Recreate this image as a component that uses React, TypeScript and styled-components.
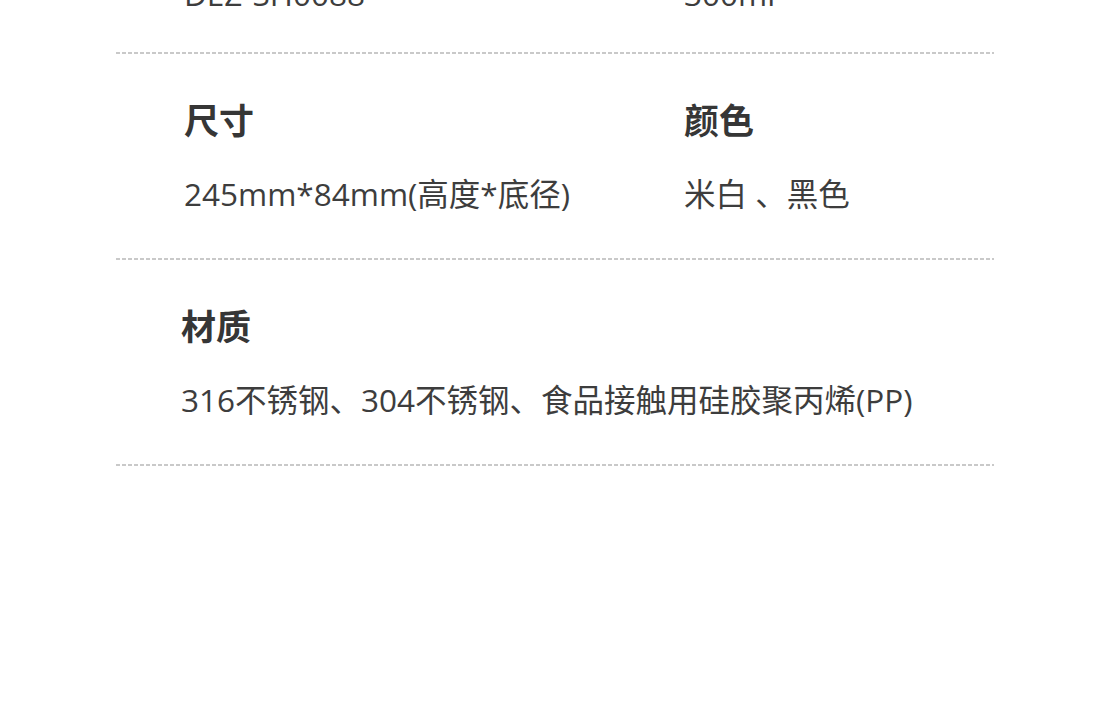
import React from "react";
import styled, { createGlobalStyle } from "styled-components";

const GlobalStyle = createGlobalStyle`
  html, body {
    margin: 0;
    padding: 0;
    background: #ffffff;
  }
  body {
    font-family: "Open Sans", "Noto Sans CJK SC", sans-serif;
    color: #3a3a3a;
    overflow: hidden;
  }
`;

const Page = styled.div`
  width: 1097px;
  height: 702px;
  overflow: hidden;
  background: #ffffff;
`;

const SpecList = styled.section`
  display: flex;
  flex-direction: column;
  margin: -146px 0 0 116px;
  width: 878px;
`;

const SpecRow = styled.div<{ $indent: number; $padBottom: number }>`
  display: grid;
  grid-template-columns: 500px 1fr;
  padding: 41px 0 ${(p) => p.$padBottom}px ${(p) => p.$indent}px;
  background-image: repeating-linear-gradient(
    to right,
    #c9c9c9 0,
    #c9c9c9 4px,
    transparent 4px,
    transparent 6px
  );
  background-size: 100% 2px;
  background-position: left bottom;
  background-repeat: no-repeat;
`;

const SpecItem = styled.div<{ $wide?: boolean }>`
  display: flex;
  flex-direction: column;
  gap: 29px;
  grid-column: ${(p) => (p.$wide ? "1 / -1" : "auto")};
`;

const Label = styled.h3`
  margin: 0;
  font-family: "Noto Sans CJK SC", sans-serif;
  font-size: 35px;
  line-height: 48px;
  font-weight: 700;
  color: #363636;
`;

const Value = styled.p`
  margin: 0;
  font-family: "Open Sans", "Noto Sans CJK SC", sans-serif;
  font-size: 31.5px;
  line-height: 44px;
  font-weight: 400;
  color: #3d3d3d;
  white-space: nowrap;
`;

type Item = { label: string; value: string };
type Row = { items: Item[]; indent: number; padBottom: number; wide?: boolean };

const rows: Row[] = [
  {
    indent: 68,
    padBottom: 38,
    items: [
      { label: "型号", value: "DEZ-SH0088" },
      { label: "容量", value: "300ml" },
    ],
  },
  {
    indent: 68,
    padBottom: 44,
    items: [
      { label: "尺寸", value: "245mm*84mm(高度*底径)" },
      { label: "颜色", value: "米白 、黑色" },
    ],
  },
  {
    indent: 65,
    padBottom: 44,
    wide: true,
    items: [
      {
        label: "材质",
        value: "316不锈钢、304不锈钢、食品接触用硅胶聚丙烯(PP)",
      },
    ],
  },
];

export default function App() {
  return (
    <Page>
      <GlobalStyle />
      <SpecList>
        {rows.map((row, i) => (
          <SpecRow key={i} $indent={row.indent} $padBottom={row.padBottom}>
            {row.items.map((item) => (
              <SpecItem key={item.label} $wide={row.wide}>
                <Label>{item.label}</Label>
                <Value>{item.value}</Value>
              </SpecItem>
            ))}
          </SpecRow>
        ))}
      </SpecList>
    </Page>
  );
}
